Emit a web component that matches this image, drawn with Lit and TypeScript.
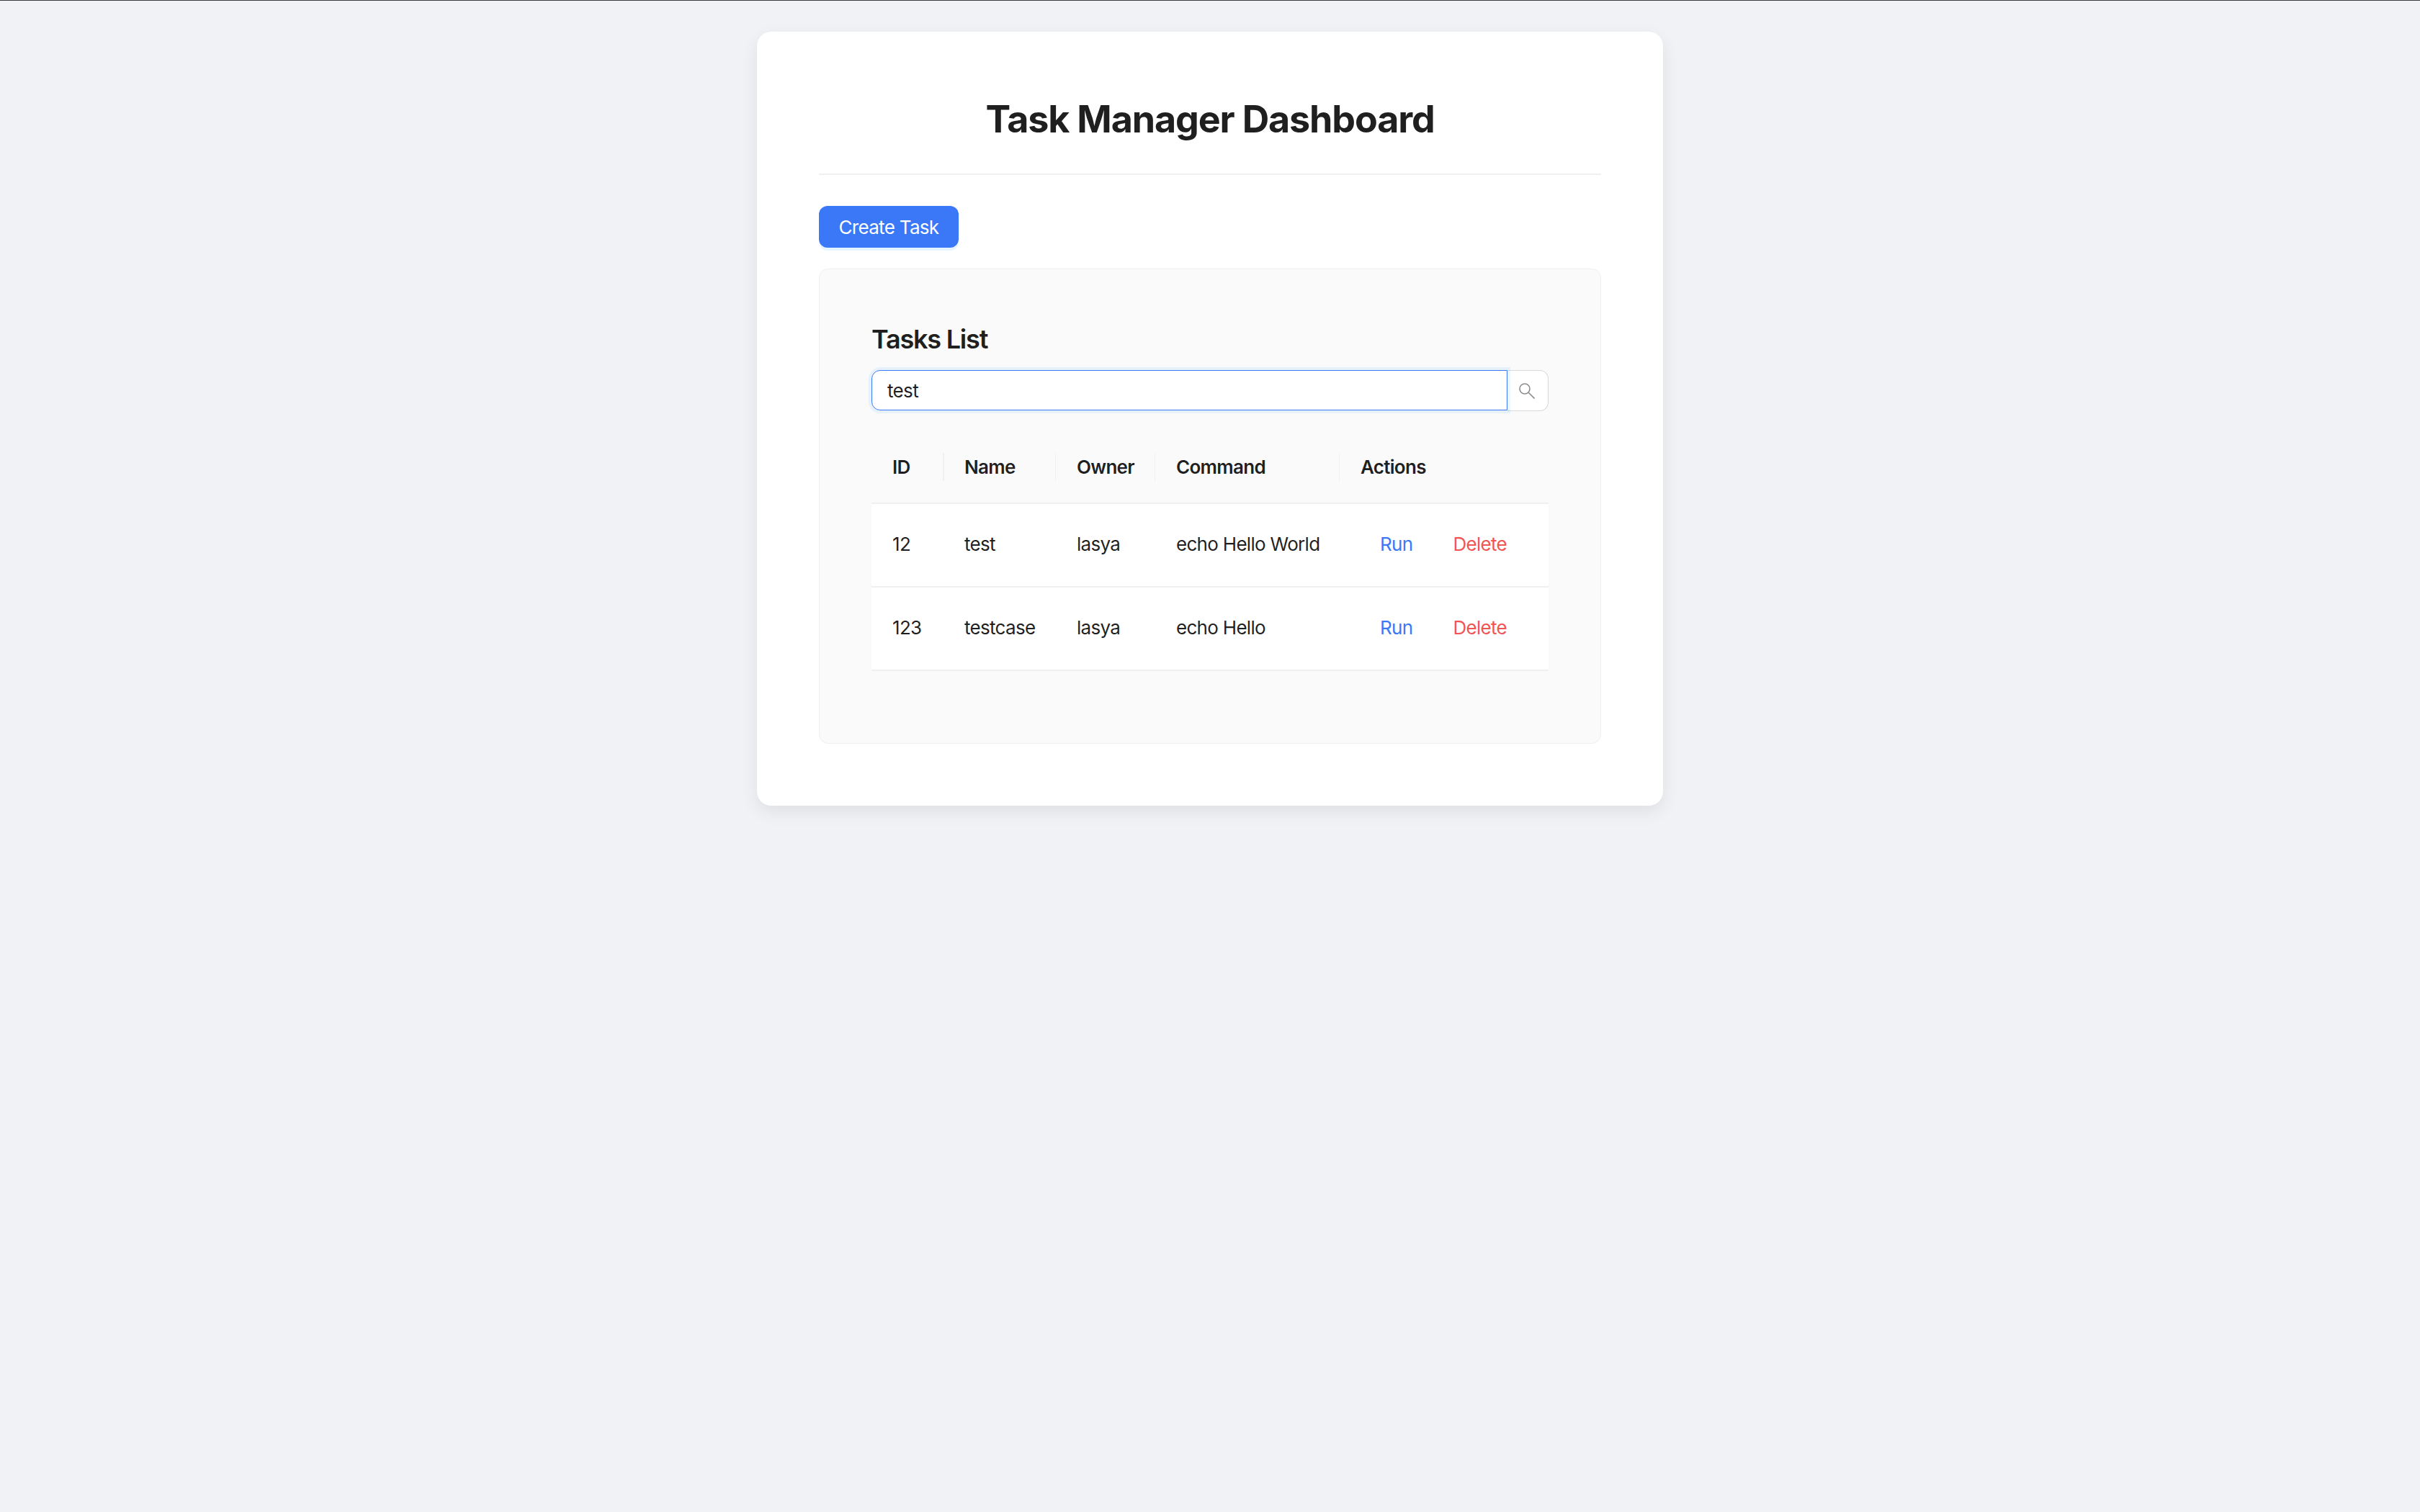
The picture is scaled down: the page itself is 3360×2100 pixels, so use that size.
import { LitElement, html, css } from "lit";
import { customElement } from "lit/decorators.js";

const tasks = [
  { id: "12", name: "test", owner: "lasya", command: "echo Hello World" },
  { id: "123", name: "testcase", owner: "lasya", command: "echo Hello" },
];

@customElement("app-root")
export class AppRoot extends LitElement {
  static styles = css`
    :host {
      display: block;
      min-height: 2100px;
      background: #f0f2f5;
      border-top: 1px solid #3a3a3c;
      box-sizing: border-box;
      font-family: Inter, "Liberation Sans", sans-serif;
      color: rgba(0, 0, 0, 0.88);
    }
    .card {
      box-sizing: border-box;
      width: 1258px;
      margin: 43px auto 0;
      padding: 86px;
      background: #fff;
      border-radius: 20px;
      box-shadow: 0 8px 24px rgba(0, 0, 0, 0.08);
    }
    h1 {
      margin: 0;
      box-sizing: border-box;
      height: 113px;
      border-bottom: 2px solid #f0f0f0;
      text-align: center;
      font-size: 52px;
      line-height: 72px;
      font-weight: 650;
      letter-spacing: -1.15px;
      color: #1f1f1f;
    }
    .create {
      display: block;
      margin: 43px 0 29px;
      box-sizing: border-box;
      width: 194px;
      height: 58px;
      padding: 0;
      border: none;
      border-radius: 12px;
      background: #3b78f8;
      color: #fff;
      font: 400 26px Inter, sans-serif;
      letter-spacing: -0.7px;
      box-shadow: 0 4px 0 rgba(5, 145, 255, 0.1);
    }
    .panel {
      box-sizing: border-box;
      height: 660px;
      padding: 72px;
      background: #fafafa;
      border: 1px solid #f0f0f0;
      border-radius: 13px;
    }
    h2 {
      margin: 0 0 18px;
      font-size: 36px;
      line-height: 50px;
      font-weight: 600;
      letter-spacing: -1.2px;
      color: #1f1f1f;
    }
    .search {
      display: flex;
      height: 57px;
    }
    .field {
      flex: 1;
      box-sizing: border-box;
      height: 56px;
      display: flex;
      align-items: center;
      padding-left: 21px;
      background: #fff;
      border: 1px solid #3b78f8;
      border-radius: 12px 0 0 12px;
      box-shadow: 0 0 0 4px rgba(5, 145, 255, 0.08);
      font-size: 26px;
      letter-spacing: -0.65px;
      position: relative;
      z-index: 1;
    }
    .go {
      box-sizing: border-box;
      width: 57px;
      height: 57px;
      display: flex;
      align-items: center;
      justify-content: center;
      padding-right: 3px;
      background: #fff;
      border: 1px solid #d9d9d9;
      border-left: none;
      border-radius: 0 12px 12px 0;
    }
    .go svg {
      width: 22px;
      height: 22px;
      display: block;
    }
    table {
      width: 940px;
      margin-top: 27px;
      table-layout: fixed;
      border-collapse: collapse;
      font-size: 26px;
      letter-spacing: -0.7px;
    }
    th {
      height: 100px;
      padding: 0 0 0 29px;
      text-align: left;
      font-weight: 600;
      position: relative;
      border-bottom: 2px solid #f0f0f0;
    }
    th + th::before {
      content: "";
      position: absolute;
      left: -1px;
      top: 31px;
      width: 1px;
      height: 39px;
      background: #f0f0f0;
    }
    th:nth-child(2)::before {
      width: 2px;
    }
    td {
      height: 116px;
      padding: 0 0 3px 29px;
      box-sizing: border-box;
      background: #fff;
      border-bottom: 2px solid #f0f0f0;
      white-space: nowrap;
    }
    td:last-child {
      padding-left: 28px;
    }
    .action {
      display: inline-block;
      padding: 0 28px;
    }
    .run { color: #3b78f8; }
    .del { color: #f05555; }
  `;

  render() {
    return html`
      <div class="card">
        <h1>Task Manager Dashboard</h1>
        <button class="create">Create Task</button>
        <section class="panel">
          <h2>Tasks List</h2>
          <div class="search">
            <div class="field">test</div>
            <div class="go">
              <svg viewBox="0 0 22 22" fill="none" stroke="#8c8c8c" stroke-width="1.6">
                <circle cx="8" cy="8" r="7"></circle>
                <path d="M13 13 L21.6 21.6"></path>
              </svg>
            </div>
          </div>
          <table>
            <colgroup>
              <col style="width:100px" /><col style="width:156px" /><col style="width:138px" /><col style="width:256px" /><col style="width:290px" />
            </colgroup>
            <thead>
              <tr><th>ID</th><th>Name</th><th>Owner</th><th>Command</th><th>Actions</th></tr>
            </thead>
            <tbody>
              ${tasks.map(
                (t) => html`<tr>
                  <td>${t.id}</td><td>${t.name}</td><td>${t.owner}</td><td>${t.command}</td>
                  <td><span class="action run">Run</span><span class="action del">Delete</span></td>
                </tr>`
              )}
            </tbody>
          </table>
        </section>
      </div>
    `;
  }
}
